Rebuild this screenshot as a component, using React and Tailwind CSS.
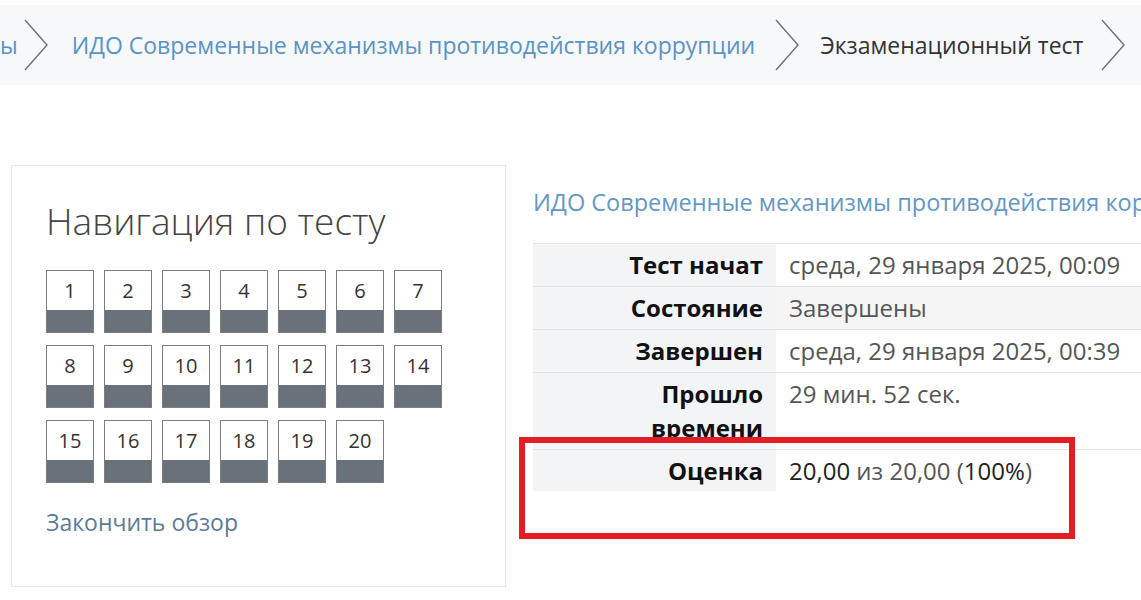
const Chevron = () => (
  <svg width="25" height="52" viewBox="0 0 25 52" className="shrink-0">
    <polyline points="1,1 23,26 1,51" fill="none" stroke="#707070" strokeWidth="1.4" />
  </svg>
);

const NavButton = ({ n }) => (
  <div className="w-[48px] h-[63px] border border-[#7d7d7d] flex flex-col bg-white">
    <div className="h-[39px] flex items-center justify-center text-[20px] text-[#333]">{n}</div>
    <div className="flex-1 bg-[#69727a]"></div>
  </div>
);

const rows = [
  { label: 'Тест начат', value: 'среда, 29 января 2025, 00:09', shade: false },
  { label: 'Состояние', value: 'Завершены', shade: true },
  { label: 'Завершен', value: 'среда, 29 января 2025, 00:39', shade: false },
  { label: 'Прошло времени', value: '29 мин. 52 сек.', shade: false },
];

export default function App() {
  const nums = Array.from({ length: 20 }, (_, i) => i + 1);
  return (
    <div className="relative w-[1141px] h-[600px] overflow-hidden bg-white font-['Open_Sans',sans-serif]">
      {/* breadcrumb */}
      <div className="mt-[5px] h-[80px] bg-[#f6f8fa] flex items-center text-[23px] whitespace-nowrap">
        <span className="text-[#5b93c4]">ы</span>
        <div className="ml-[6px] mr-[23px]"><Chevron /></div>
        <span className="text-[#5b93c4]">ИДО Современные механизмы противодействия коррупции</span>
        <div className="ml-[20px] mr-[20px]"><Chevron /></div>
        <span className="text-[#333]">Экзаменационный тест</span>
        <div className="ml-[18px]"><Chevron /></div>
      </div>

      <div className="flex items-start mt-[80px]">
        {/* quiz navigation block */}
        <div className="ml-[11px] w-[495px] h-[422px] border border-[#e6e6e6] pl-[34px] pt-[30px]">
          <h2 className="text-[37px] font-light leading-[50px] text-[#444]">Навигация по тесту</h2>
          <div className="mt-[24px] grid grid-cols-[repeat(7,48px)] gap-x-[10px] gap-y-[12px]">
            {nums.map((n) => (
              <NavButton key={n} n={n} />
            ))}
          </div>
          <div className="mt-[22px] text-[23px] text-[#5d7b96]">Закончить обзор</div>
        </div>

        {/* summary */}
        <div className="ml-[27px] flex-1 min-w-0">
          <div className="mt-[17px] text-[23.5px] leading-[40px] text-[#6497c4] whitespace-nowrap overflow-hidden">
            ИДО Современные механизмы противодействия коррупции
          </div>
          <div className="mt-[21px] w-[700px] text-[24px]">
            <div className="border-t border-[#e3e3e3]"></div>
            {rows.map((r) => (
              <div key={r.label} className="flex border-b border-[#e3e3e3]">
                <div className="w-[243px] shrink-0 bg-[#f3f4f5] text-right font-bold text-[#111] leading-[34px] py-[4px] pr-[13px] pl-[70px]">
                  {r.label}
                </div>
                <div className={`flex-1 leading-[34px] py-[4px] pl-[13px] text-[#555] ${r.shade ? 'bg-[#f5f5f5]' : 'bg-white'}`}>
                  {r.value}
                </div>
              </div>
            ))}
            <div className="flex">
              <div className="w-[243px] shrink-0 bg-[#f3f4f5] text-right font-bold text-[#111] leading-[33px] py-[4px] pr-[13px]">
                Оценка
              </div>
              <div className="flex-1 leading-[33px] py-[4px] pl-[13px] text-[#555]">
                <span className="text-[#222]">20,00</span> из 20,00 (<span className="text-[#222]">100%</span>)
              </div>
            </div>
          </div>
        </div>
      </div>

      {/* red annotation frame */}
      <div className="absolute left-[519px] top-[437px] w-[556px] h-[102px] border-[6px] border-[#e31d25]"></div>
    </div>
  );
}
